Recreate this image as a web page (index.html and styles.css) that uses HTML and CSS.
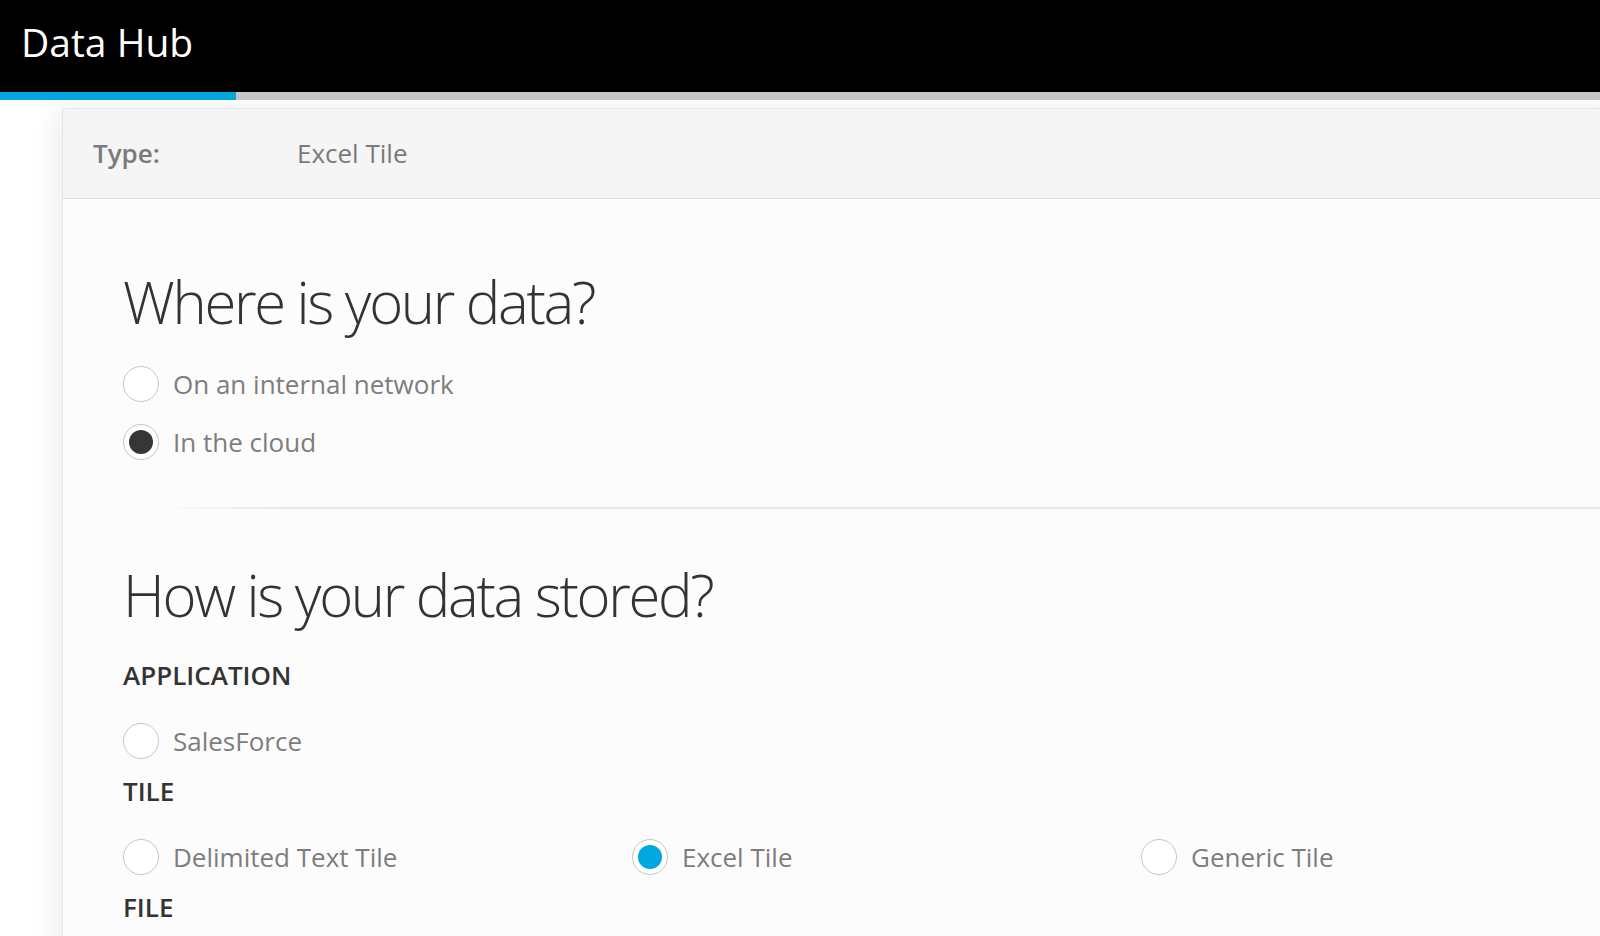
FILE: index.html
```html
<!DOCTYPE html>
<html lang="en">
<head>
  <meta charset="UTF-8">
  <meta name="viewport" content="width=device-width, initial-scale=1.0">
  <title>Data Hub</title>
  <link rel="stylesheet" href="styles.css">
</head>
<body>
  <header class="topbar">
    <h1>Data Hub</h1>
  </header>
  <div class="progress"><div class="progress-fill" style="width: 14.75%"></div></div>

  <main class="page">
    <div class="card">
      <div class="card-head">
        <span class="field-label">Type:</span>
        <span class="field-value">Excel Tile</span>
      </div>

      <div class="card-body">
        <h2>Where is your data?</h2>
        <div class="radio-row">
          <span class="radio"></span>
          <span class="radio-text">On an internal network</span>
        </div>
        <div class="radio-row">
          <span class="radio checked"></span>
          <span class="radio-text">In the cloud</span>
        </div>

        <div class="divider"></div>

        <h2>How is your data stored?</h2>
        <div class="group-label first">APPLICATION</div>
        <div class="options">
          <div class="radio-row">
            <span class="radio"></span>
            <span class="radio-text">SalesForce</span>
          </div>
        </div>
        <div class="group-label">TILE</div>
        <div class="options">
          <div class="radio-row">
            <span class="radio"></span>
            <span class="radio-text">Delimited Text Tile</span>
          </div>
          <div class="radio-row">
            <span class="radio checked blue"></span>
            <span class="radio-text">Excel Tile</span>
          </div>
          <div class="radio-row">
            <span class="radio"></span>
            <span class="radio-text">Generic Tile</span>
          </div>
        </div>
        <div class="group-label">FILE</div>
      </div>
    </div>
  </main>
</body>
</html>
```

FILE: styles.css
```css
html, body {
  margin: 0;
  padding: 0;
  height: 100%;
  overflow: hidden;
}
body {
  font-family: "Open Sans", Arial, sans-serif;
  background: #fff;
  color: #333;
}
.topbar {
  background: #000;
  height: 92px;
  padding-left: 21px;
}
.topbar h1 {
  margin: 0;
  font-size: 39px;
  font-weight: 400;
  line-height: 84px;
  color: #fff;
}
.progress {
  height: 8px;
  background: #c9c9c9;
}
.progress-fill {
  height: 100%;
  background: #00a8e1;
}
.page {
  padding: 8px 0 0 62px;
}
.card {
  width: calc(100% + 20px);
  min-height: 900px;
  background: #fcfcfc;
  border-left: 1px solid #e4e4e4;
  border-top: 1px solid #e8e8e8;
  box-shadow: -6px 0 24px rgba(0,0,0,0.07);
}
.card-head {
  display: flex;
  align-items: center;
  box-sizing: border-box;
  height: 90px;
  padding: 0 0 1px 30px;
  background: #f5f5f5;
  border-bottom: 1px solid #e0e0e0;
  color: #7a7a7a;
}
.field-label {
  width: 204px;
  font-size: 26px;
  font-weight: 600;
}
.field-value {
  font-size: 26px;
}
.card-body {
  padding: 68px 0 0 60px;
}
.card-body h2 {
  margin: 0;
  font-size: 58px;
  font-weight: 300;
  line-height: 70px;
  letter-spacing: -2.3px;
  color: #333;
}
.radio-row {
  display: flex;
  align-items: center;
  height: 58px;
}
.card-body h2 + .radio-row {
  margin-top: 18px;
}
.radio {
  position: relative;
  box-sizing: border-box;
  width: 36px;
  height: 36px;
  border: 1px solid #c6c6c6;
  border-radius: 50%;
  background: #fff;
  flex-shrink: 0;
}
.radio.checked::after {
  content: "";
  position: absolute;
  top: 5px;
  left: 5px;
  width: 24px;
  height: 24px;
  border-radius: 50%;
  background: #363636;
}
.radio.blue::after {
  background: #00a8e1;
}
.radio-text {
  margin-left: 14px;
  font-size: 26px;
  color: #7d7d7d;
}
.divider {
  height: 2px;
  margin: 36px 0 51px 36px;
  background: linear-gradient(to right, rgba(232,232,232,0), #e8e8e8 120px);
}
.group-label {
  margin-top: 3px;
  font-size: 26px;
  font-weight: 600;
  line-height: 36px;
  color: #333;
}
.group-label.first {
  margin-top: 27px;
}
.options {
  display: grid;
  grid-template-columns: repeat(3, 509px);
  margin-top: 19px;
}
```
